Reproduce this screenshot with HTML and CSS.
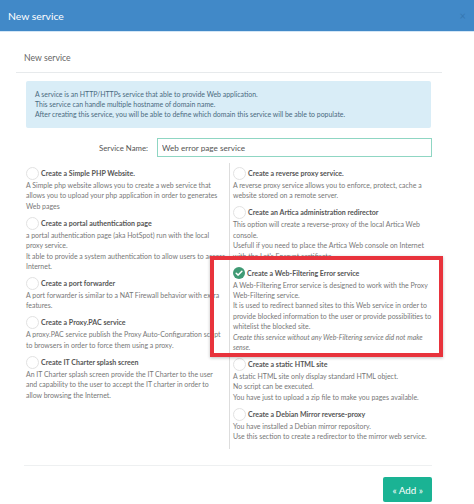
FILE: index.html
```html
<!DOCTYPE html>
<html lang="en">
<head>
  <meta charset="UTF-8" />
  <title>New service</title>
  <link rel="stylesheet" href="styles.css">
</head>
<body>

  <!-- Modal header -->
  <div class="modal-header">
    <span class="modal-title">New service</span>
    <span class="modal-close">&times;</span>
  </div>

  <div class="modal-body">
    <div class="section-title">New service</div>

    <div class="info-box">
      A service is an HTTP/HTTPs service that able to provide Web application.<br>
      This service can handle multiple hostname of domain name.<br>
      After creating this service, you will be able to define which domain this service will be able to populate.
    </div>

    <div class="form-row">
      <label for="serviceName">Service Name:</label>
      <input type="text" id="serviceName" value="Web error page service">
    </div>

    <!-- Service types -->
    <div class="options">
      <div class="col col-left">
        <div class="option">
          <div class="option-title"><span class="radio"></span>Create a Simple PHP Website.</div>
          <p>A Simple php website allows you to create a web service that allows you to upload your php application in order to generates Web pages</p>
        </div>
        <div class="option">
          <div class="option-title"><span class="radio"></span>Create a portal authentication page</div>
          <p>a portal authentication page (aka HotSpot) run with the local proxy service.<br><span class="nowrap">It able to provide a system authentication to allow users to access</span> Internet.</p>
        </div>
        <div class="option">
          <div class="option-title"><span class="radio"></span>Create a port forwarder</div>
          <p>A port forwarder is similar to a NAT Firewall behavior with extra features.</p>
        </div>
        <div class="option">
          <div class="option-title"><span class="radio"></span>Create a Proxy.PAC service</div>
          <p>A proxy.PAC service publish the Proxy Auto-Configuration script to browsers in order to force them using a proxy.</p>
        </div>
        <div class="option">
          <div class="option-title"><span class="radio"></span>Create IT Charter splash screen</div>
          <p>An IT Charter splash screen provide the IT Charter to the user and capability to the user to accept the IT charter in order to allow browsing the Internet.</p>
        </div>
      </div>

      <div class="col col-right">
        <div class="option">
          <div class="option-title"><span class="radio"></span>Create a reverse proxy service.</div>
          <p>A reverse proxy service allows you to enforce, protect, cache a website stored on a remote server.</p>
        </div>
        <div class="option">
          <div class="option-title"><span class="radio"></span>Create an Artica administration redirector</div>
          <p>This option will create a reverse-proxy of the local Artica Web console.<br>Usefull if you need to place the Artica Web console on Internet with the Let's Encrypt certificate</p>
        </div>
        <div class="option">
          <div class="option-title">
            <span class="radio radio-checked">
              <svg width="12" height="12" viewBox="0 0 12 12"><circle cx="6" cy="6" r="6" fill="#3f9a74"/><path d="M3.2 6.2 L5.2 8.1 L8.9 4.2" fill="none" stroke="#fff" stroke-width="1.5" stroke-linecap="round" stroke-linejoin="round"/></svg>
            </span>Create a Web-Filtering Error service</div>
          <p>A Web-Filtering Error service is designed to work with the Proxy Web-Filtering service.<br>It is used to redirect banned sites to this Web service in order to provide blocked information to the user or provide possibilities to whitelist the blocked site.<br><i>Create this service without any Web-Filtering service did not make sense.</i></p>
        </div>
        <div class="option">
          <div class="option-title"><span class="radio"></span>Create a static HTML site</div>
          <p>A static HTML site only display standard HTML object.<br>No script can be executed.<br>You have just to upload a zip file to make you pages available.</p>
        </div>
        <div class="option">
          <div class="option-title"><span class="radio"></span>Create a Debian Mirror reverse-proxy</div>
          <p>You have installed a Debian mirror repository.<br>Use this section to create a redirector to the mirror web service.</p>
        </div>
      </div>

      <!-- annotation frame around the selected option -->
      <div class="highlight"></div>
    </div>

    <div class="footer">
      <button class="btn-add">&laquo; Add &raquo;</button>
    </div>
  </div>

</body>
</html>
```

FILE: styles.css
```css
body {
  margin: 0;
  font-family: Lato, 'Open Sans', sans-serif;
  background-color: #fff;
  color: #676a6c;
}

.modal-header {
  display: flex;
  align-items: center;
  justify-content: space-between;
  height: 31px;
  padding: 0 8px;
  background-color: #4189c8;
  border-bottom: 1px solid #d3e6f6;
}

.modal-title {
  color: #fff;
  font-size: 10.4px;
}

.modal-close {
  color: #2f6da5;
  font-size: 11px;
  opacity: 0.6;
}

.modal-body {
  width: 426px;
  margin-left: 16px;
}

.section-title {
  padding: 21px 8px 9px;
  font-size: 8.7px;
  line-height: 10px;
  color: #666;
  border-bottom: 1px solid #e7eaec;
}

.info-box {
  margin: 8px 11px 0 10px;
  padding: 8px 9px 9px;
  background-color: #d9edf7;
  color: #4a6a80;
  font-size: 6.93px;
  line-height: 10px;
  border-radius: 2px;
}

.form-row {
  display: flex;
  align-items: center;
  margin: 10px 10px 0 0;
}

.form-row label {
  width: 132px;
  text-align: right;
  font-size: 7.8px;
  color: #555;
  margin-right: 9px;
}

.form-row input {
  flex: 1;
  height: 19px;
  box-sizing: border-box;
  padding: 0 4px;
  border: 1px solid #8fd6c3;
  font-family: Lato, sans-serif;
  font-size: 8.2px;
  color: #555;
  outline: none;
}

.options {
  position: relative;
  display: flex;
  margin: 6px 0 0 10px;
}

.col-left {
  width: 203px;
  padding-top: 4px;
}

.col-right {
  flex: 1;
  padding: 4px 0 2px 3px;
  border-left: 1px solid #ddd;
}

.option {
  margin-bottom: 5.6px;
}

.option-title {
  display: flex;
  align-items: center;
  font-size: 7.05px;
  font-weight: bold;
  color: #555;
  height: 13px;
}

.radio {
  display: inline-block;
  flex-shrink: 0;
  width: 11px;
  height: 11px;
  margin-right: 2px;
  border: 1px solid #e2e2e2;
  border-radius: 50%;
}

.radio-checked {
  border: none;
  width: 12px;
  height: 12px;
}

.option p {
  margin: 0;
  font-size: 6.95px;
  line-height: 10.4px;
  color: #777;
}

.col-left .option p {
  margin-right: 4px;
}

.col-right .option p {
  margin-right: 7px;
}

.nowrap {
  white-space: nowrap;
}

.highlight {
  position: absolute;
  left: 184px;
  top: 93px;
  width: 225px;
  height: 93px;
  border: 4px solid #e8333c;
  box-shadow: 0 1px 3px rgba(0,0,0,0.25);
}

.footer {
  display: flex;
  justify-content: flex-end;
  margin: 16px 10px 0 8px;
  padding-top: 11px;
  border-top: 1px solid #eef0f1;
}

.btn-add {
  height: 25px;
  padding: 0 9px;
  background-color: #1ab394;
  color: #fff;
  border: none;
  border-radius: 2px;
  font-family: Lato, sans-serif;
  font-size: 9.8px;
}
```
